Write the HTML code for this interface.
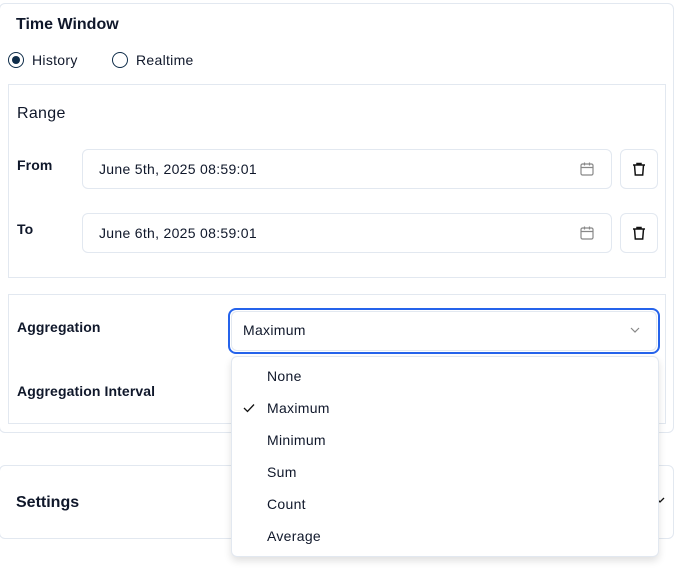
<!DOCTYPE html>
<html><head><style>
*{box-sizing:border-box;margin:0;padding:0}
body{width:680px;height:568px;background:#fff;font-family:"Liberation Sans",sans-serif;color:#0f172a;position:relative;overflow:hidden;font-size:14px;letter-spacing:0.3px}
.abs{position:absolute}
.card{border:1px solid #e2e8f0;border-radius:6px;background:#fff}
.box{border:1px solid #e2e8f0;background:#fff}
.inp{border:1px solid #e2e8f0;border-radius:6px;background:#fff}
.lbl{font-size:14px;font-weight:bold;color:#0f172a;letter-spacing:0.1px}
</style></head><body>
<div class="abs card" style="left:-1px;top:3px;width:675px;height:430px"></div>
<div class="abs" style="left:16px;top:16px;font-size:16px;font-weight:bold;letter-spacing:0">Time Window</div>
<div class="abs" style="left:8px;top:52px;width:16px;height:16px;border:1.5px solid #0f2d4a;border-radius:50%"></div>
<div class="abs" style="left:12px;top:56px;width:8px;height:8px;background:#0f2d4a;border-radius:50%"></div>
<div class="abs" style="left:32px;top:52px;">History</div>
<div class="abs" style="left:112px;top:52px;width:16px;height:16px;border:1.5px solid #0f2d4a;border-radius:50%"></div>
<div class="abs" style="left:136px;top:52px;">Realtime</div>

<div class="abs box" style="left:8px;top:84px;width:658px;height:194px"></div>
<div class="abs" style="left:17px;top:105px;font-size:16px">Range</div>
<div class="abs lbl" style="left:17px;top:157px">From</div>
<div class="abs inp" style="left:82px;top:149px;width:530px;height:40px"></div>
<div class="abs" style="left:99px;top:161px">June 5th, 2025 08:59:01</div>
<div class="abs lbl" style="left:17px;top:221px">To</div>
<div class="abs inp" style="left:82px;top:213px;width:530px;height:40px"></div>
<div class="abs" style="left:99px;top:225px">June 6th, 2025 08:59:01</div>

<svg class="abs" style="left:579px;top:161px" width="16" height="16" viewBox="0 0 16 16" fill="none" stroke="#888" stroke-width="1.2"><rect x="2" y="3" width="12" height="11" rx="1.5"/><path d="M2 6.5h12M5.5 1.5v3M10.5 1.5v3"/></svg>
<svg class="abs" style="left:579px;top:225px" width="16" height="16" viewBox="0 0 16 16" fill="none" stroke="#888" stroke-width="1.2"><rect x="2" y="3" width="12" height="11" rx="1.5"/><path d="M2 6.5h12M5.5 1.5v3M10.5 1.5v3"/></svg>

<div class="abs inp" style="left:620px;top:149px;width:38px;height:40px"></div>
<svg class="abs" style="left:631px;top:161px" width="16" height="16" viewBox="0 0 16 16" fill="none" stroke="#111" stroke-width="1.5"><path d="M2 4h12M6 4V2.5h4V4M3.5 4l.8 10h7.4l.8-10"/></svg>
<div class="abs inp" style="left:620px;top:213px;width:38px;height:40px"></div>
<svg class="abs" style="left:631px;top:225px" width="16" height="16" viewBox="0 0 16 16" fill="none" stroke="#111" stroke-width="1.5"><path d="M2 4h12M6 4V2.5h4V4M3.5 4l.8 10h7.4l.8-10"/></svg>

<div class="abs box" style="left:8px;top:294px;width:658px;height:130px"></div>
<div class="abs lbl" style="left:17px;top:319px">Aggregation</div>
<div class="abs lbl" style="left:17px;top:383px">Aggregation Interval</div>
<div class="abs" style="left:228px;top:308px;width:432px;height:46px;border:2px solid #2563eb;border-radius:8px;background:#fff"></div>
<div class="abs" style="left:231px;top:311px;width:426px;height:40px;border:1px solid #e2e8f0;border-radius:6px"></div>
<div class="abs" style="left:243px;top:322px">Maximum</div>
<svg class="abs" style="left:629px;top:325px" width="12" height="10" viewBox="0 0 12 10" fill="none" stroke="#888" stroke-width="1.2"><path d="M2 3l4 4 4-4"/></svg>

<div class="abs card" style="left:-1px;top:465px;width:675px;height:74px"></div>
<div class="abs" style="left:16px;top:494px;font-size:16px;font-weight:bold;letter-spacing:0">Settings</div>
<svg class="abs" style="left:655px;top:495px" width="10" height="10" viewBox="0 0 10 10" fill="none" stroke="#111" stroke-width="1.3"><path d="M1 3l4 4 4-4"/></svg>

<div class="abs" style="left:231px;top:356px;width:428px;height:201px;border:1px solid #e2e8f0;border-radius:6px;background:#fff;box-shadow:0 4px 8px rgba(0,0,0,.12)"></div>
<svg class="abs" style="left:242px;top:402px" width="14" height="12" viewBox="0 0 14 12" fill="none" stroke="#111" stroke-width="1.3"><path d="M2 6l3.5 3.5L12 2.5"/></svg>
<div class="abs" style="left:267px;top:368px;line-height:16px">None</div>
<div class="abs" style="left:267px;top:400px;line-height:16px">Maximum</div>
<div class="abs" style="left:267px;top:432px;line-height:16px">Minimum</div>
<div class="abs" style="left:267px;top:464px;line-height:16px">Sum</div>
<div class="abs" style="left:267px;top:496px;line-height:16px">Count</div>
<div class="abs" style="left:267px;top:528px;line-height:16px">Average</div>
</body></html>
